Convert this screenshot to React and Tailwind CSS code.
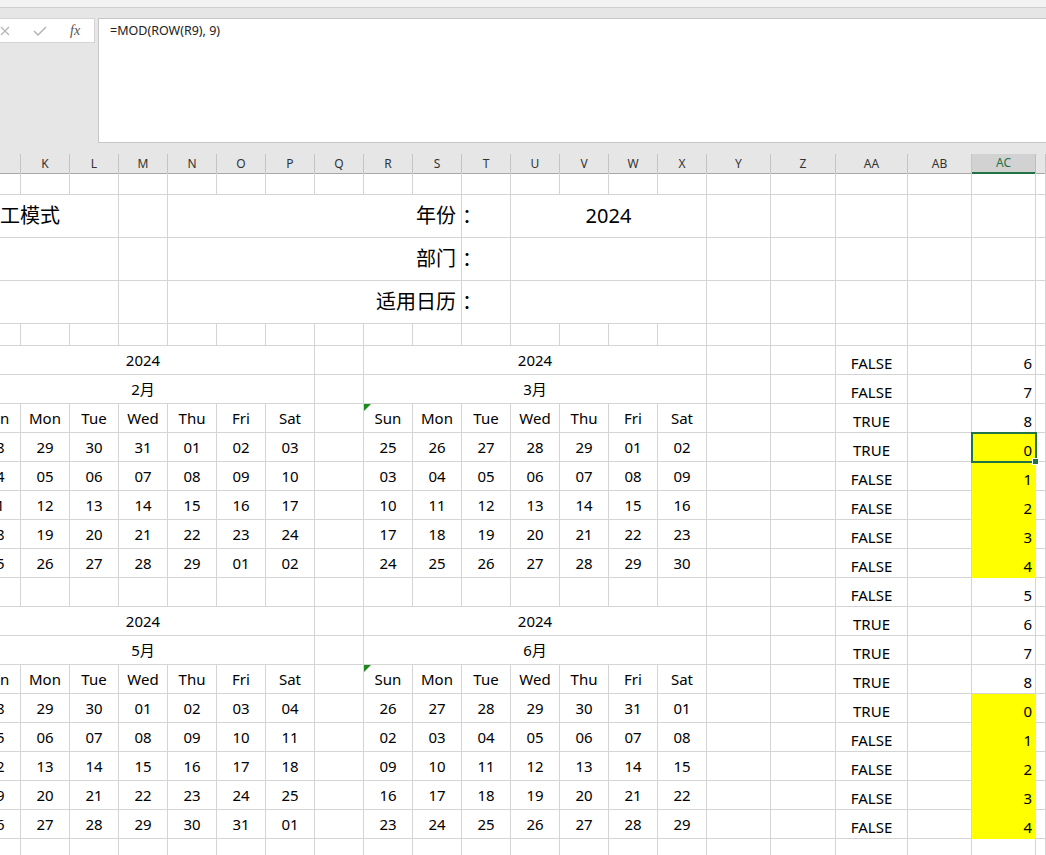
import React from "react";

const COLS = "grid grid-cols-[21px_repeat(14,49px)_64px_65px_72px_64px_64px_10px]";
const SPAN = { 1: "", 3: "col-span-3", 4: "col-span-4", 6: "col-span-6", 7: "col-span-7" };

function Cell({ span = 1, yellow = false, className = "", children }) {
  return (
    <div
      className={`${SPAN[span]} ${
        yellow ? "bg-[#ffff00] border-[#ffff00]" : "border-[#d4d4d4]"
      } relative flex min-w-0 overflow-hidden border-r border-b ${className}`}
    >
      {children}
    </div>
  );
}

function Partial({ children }) {
  // first visible column J is cut: its real left edge lies 28px off-screen
  return <div className="ml-[-28px] w-[calc(100%+28px)] shrink-0 text-center">{children}</div>;
}

const LETTERS = ["", "K", "L", "M", "N", "O", "P", "Q", "R", "S", "T", "U", "V", "W", "X", "Y", "Z", "AA", "AB", "AC", ""];
const DAYS = ["Sun", "Mon", "Tue", "Wed", "Thu", "Fri", "Sat"];

const feb = [
  ["28", "29", "30", "31", "01", "02", "03"],
  ["04", "05", "06", "07", "08", "09", "10"],
  ["11", "12", "13", "14", "15", "16", "17"],
  ["18", "19", "20", "21", "22", "23", "24"],
  ["25", "26", "27", "28", "29", "01", "02"],
];
const mar = [
  ["25", "26", "27", "28", "29", "01", "02"],
  ["03", "04", "05", "06", "07", "08", "09"],
  ["10", "11", "12", "13", "14", "15", "16"],
  ["17", "18", "19", "20", "21", "22", "23"],
  ["24", "25", "26", "27", "28", "29", "30"],
];
const may = [
  ["28", "29", "30", "01", "02", "03", "04"],
  ["05", "06", "07", "08", "09", "10", "11"],
  ["12", "13", "14", "15", "16", "17", "18"],
  ["19", "20", "21", "22", "23", "24", "25"],
  ["26", "27", "28", "29", "30", "31", "01"],
];
const jun = [
  ["26", "27", "28", "29", "30", "31", "01"],
  ["02", "03", "04", "05", "06", "07", "08"],
  ["09", "10", "11", "12", "13", "14", "15"],
  ["16", "17", "18", "19", "20", "21", "22"],
  ["23", "24", "25", "26", "27", "28", "29"],
];

const SIDE = [
  ["FALSE", "6", false], ["FALSE", "7", false], ["TRUE", "8", false], ["TRUE", "0", true],
  ["FALSE", "1", true], ["FALSE", "2", true], ["FALSE", "3", true], ["FALSE", "4", true],
  ["FALSE", "5", false], ["TRUE", "6", false], ["TRUE", "7", false], ["TRUE", "8", false],
  ["TRUE", "0", true], ["FALSE", "1", true], ["FALSE", "2", true], ["FALSE", "3", true],
  ["FALSE", "4", true], ["", "", false],
];

const CAL = [
  { t: "year" }, { t: "month", a: "2月", b: "3月" }, { t: "days" },
  ...feb.map((r, i) => ({ t: "dates", a: r, b: mar[i] })),
  { t: "blank" },
  { t: "year" }, { t: "month", a: "5月", b: "6月" }, { t: "days" },
  ...may.map((r, i) => ({ t: "dates", a: r, b: jun[i] })),
  { t: "blank" },
];

function Triangle() {
  return (
    <svg className="absolute left-0 top-0" width="7" height="7" viewBox="0 0 7 7">
      <polygon points="0,0 7,0 0,7" fill="#1a8a1a" />
    </svg>
  );
}

function SideCells({ i }) {
  const [aa, ac, yellow] = SIDE[i];
  return (
    <>
      <Cell />
      <Cell />
      <Cell className="items-end justify-center">{aa}</Cell>
      <Cell />
      <Cell yellow={yellow} className="items-end justify-end pr-[3px] overflow-visible">
        {ac}
        {i === 3 && (
          <div className="absolute left-[-1px] top-[-1px] z-10 h-[31px] w-[66px] border-2 border-[#217346]">
            <div className="absolute bottom-[-4px] right-[-4px] h-[7px] w-[7px] border border-white bg-[#217346]" />
          </div>
        )}
      </Cell>
      <Cell />
    </>
  );
}

function CalRow({ row, i }) {
  let left;
  if (row.t === "year" || row.t === "month") {
    const a = row.t === "year" ? "2024" : row.a;
    const b = row.t === "year" ? "2024" : row.b;
    left = (
      <>
        <Cell span={7} className="items-center">
          <Partial>{a}</Partial>
        </Cell>
        <Cell />
        <Cell span={7} className="items-center justify-center">{b}</Cell>
      </>
    );
  } else if (row.t === "days" || row.t === "dates") {
    const a = row.t === "days" ? DAYS : row.a;
    const b = row.t === "days" ? DAYS : row.b;
    left = (
      <>
        <Cell className="items-center">
          <Partial>{a[0]}</Partial>
        </Cell>
        {a.slice(1).map((v, k) => (
          <Cell key={"a" + k} className="items-center justify-center">{v}</Cell>
        ))}
        <Cell />
        {b.map((v, k) => (
          <Cell key={"b" + k} className="items-center justify-center">
            {row.t === "days" && k === 0 && <Triangle />}
            {v}
          </Cell>
        ))}
      </>
    );
  } else {
    left = (
      <>
        {Array.from({ length: 15 }).map((_, k) => (
          <Cell key={k} />
        ))}
      </>
    );
  }
  return (
    <div className={`${COLS} h-[29px] text-[15px] text-black`}>
      {left}
      <SideCells i={i} />
    </div>
  );
}

function BlankRow() {
  return (
    <div className={`${COLS} h-[22px]`}>
      {Array.from({ length: 21 }).map((_, k) => (
        <Cell key={k} />
      ))}
    </div>
  );
}

function InfoRow({ title, label, year }) {
  return (
    <div className={`${COLS} h-[43px] text-[20px] text-black`}>
      <Cell span={3} className="items-center">{title}</Cell>
      <Cell />
      <Cell span={6} className="items-center justify-end pr-[5px]">{label}</Cell>
      <Cell className="items-center justify-start">{label ? "：" : ""}</Cell>
      <Cell span={4} className="items-center justify-center">{year}</Cell>
      <Cell />
      <Cell />
      <Cell />
      <Cell />
      <Cell />
      <Cell />
    </div>
  );
}

export default function App() {
  return (
    <div className="h-[855px] w-[1046px] overflow-hidden bg-white font-['Noto_Sans','Noto_Sans_CJK_SC',sans-serif]">
      {/* formula bar */}
      <div className="flex h-[154px] flex-col bg-[#e6e6e6]">
        <div className="h-[8px] border-b border-[#cfcfcf] bg-[#f3f3f3]" />
        <div className="flex pt-[10px]">
          <div className="flex h-[25px] w-[95px] items-center border border-l-0 border-[#d4d4d4] bg-white">
            <svg className="ml-[0px]" width="10" height="10" viewBox="0 0 10 10">
              <path d="M1 1 L9 9 M9 1 L1 9" stroke="#b5b5b5" strokeWidth="1.3" fill="none" />
            </svg>
            <svg className="ml-[23px]" width="14" height="10" viewBox="0 0 14 10">
              <path d="M1 5 L5 9 L13 1" stroke="#b5b5b5" strokeWidth="1.5" fill="none" />
            </svg>
            <span className="ml-[23px] font-['Liberation_Serif',serif] text-[14px] italic leading-none text-[#555]">
              fx
            </span>
          </div>
          <div className="ml-[3px] h-[125px] flex-1 border border-r-0 border-[#c6c6c6] bg-white pl-[11px] pt-[3px] text-[12.5px] leading-[18px] text-[#222]">
            =MOD(ROW(R9), 9)
          </div>
        </div>
      </div>

      {/* column headers */}
      <div className={`${COLS} h-[19px] bg-[#e6e6e6] text-[12px] text-[#333]`}>
        {LETTERS.map((l, k) =>
          l === "AC" ? (
            <div
              key={k}
              className="flex items-center justify-center border-r border-b-2 border-r-[#bdbdbd] border-b-[#217346] bg-[#d2d2d2] text-[#217346]"
            >
              {l}
            </div>
          ) : (
            <div
              key={k}
              className="flex items-center justify-center border-r border-b border-r-[#c4c4c4] border-b-[#a8a8a8]"
            >
              {l}
            </div>
          )
        )}
      </div>

      {/* sheet body */}
      <BlankRow />
      <InfoRow title="工模式" label="年份" year="2024" />
      <InfoRow title="" label="部门" year="" />
      <InfoRow title="" label="适用日历" year="" />
      <BlankRow />
      {CAL.map((row, i) => (
        <CalRow key={i} row={row} i={i} />
      ))}
    </div>
  );
}
